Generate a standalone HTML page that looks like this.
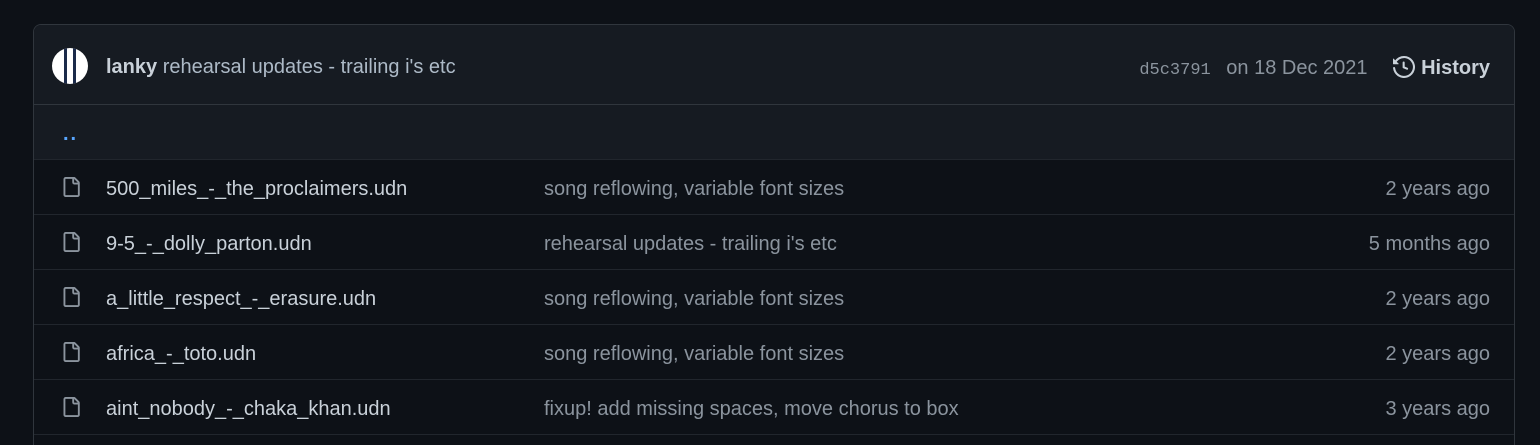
<!DOCTYPE html>
<html style="overflow:hidden;height:445px"><head><style>
body{margin:0;background:#0d1117;font-family:"Liberation Sans",sans-serif;width:1540px;height:445px;overflow:hidden;color:#c9d1d9;position:relative}
.box{position:absolute;left:33px;top:24px;width:1480px;height:420px;border:1px solid #30363d;border-bottom:none;border-radius:8px 8px 0 0;overflow:hidden}
.hdr{height:79px;background:#161b22;border-bottom:1px solid #30363d;position:relative;font-size:20px}
.av{position:absolute;left:18px;top:23px;width:36px;height:36px;border-radius:50%;background:#fff;overflow:hidden}
.av i{position:absolute;top:0;width:3px;height:36px;background:#1b2a4a}
.msg{position:absolute;left:72px;top:31px;color:#adbac7}
.msg b{color:#c9d1d9}
.rt{position:absolute;right:24px;top:31px;color:#8b949e}
.rt code{font-family:"Liberation Mono",monospace;font-size:17px;margin-right:10px}
.hist{color:#c9d1d9;font-weight:bold;margin-left:20px}
.row{height:54px;border-bottom:1px solid #21262d;position:relative;font-size:20px}
.up{background:#161b22}
.up span{position:absolute;left:29px;top:18px;color:#58a6ff;font-size:20px;letter-spacing:2px;font-weight:bold}
.row svg{position:absolute;left:27px;top:17px}
.n{position:absolute;left:72px;top:18px;color:#c9d1d9}
.c{position:absolute;left:510px;top:18px;color:#8b949e}
.t{position:absolute;right:24px;top:18px;color:#8b949e}
</style></head><body>
<div class="box">
<div class="hdr">
<div class="av"><i style="left:12px"></i><i style="left:21px"></i></div>
<div class="msg"><b>lanky</b> rehearsal updates - trailing i's etc</div>
<div class="rt"><code>d5c3791</code> on 18 Dec 2021 <span class="hist"><svg width="22" height="22" viewBox="0 0 16 16" style="vertical-align:-4px;margin-right:6px" fill="#c9d1d9"><path d="M1.643 3.143.427 1.927A.25.25 0 0 0 0 2.104V5.75c0 .138.112.25.25.25h3.646a.25.25 0 0 0 .177-.427L2.715 4.215a6.5 6.5 0 1 1-1.18 4.458.75.75 0 1 0-1.493.154 8.001 8.001 0 1 0 1.6-5.684ZM7.75 4a.75.75 0 0 1 .75.75v2.992l2.028.812a.75.75 0 0 1-.557 1.392l-2.5-1A.751.751 0 0 1 7 8.25v-3.5A.75.75 0 0 1 7.75 4Z"/></svg>History</span></div>
</div>
<div class="row up"><span>..</span></div>
<div class="row"><svg width="20" height="20" viewBox="0 0 16 16" fill="#8b949e"><path d="M2 1.75C2 .784 2.784 0 3.75 0h6.586c.464 0 .909.184 1.237.513l2.914 2.914c.329.328.513.773.513 1.237v9.586A1.75 1.75 0 0 1 13.25 16h-9.5A1.75 1.75 0 0 1 2 14.25Zm1.75-.25a.25.25 0 0 0-.25.25v12.5c0 .138.112.25.25.25h9.5a.25.25 0 0 0 .25-.25V6h-2.750A1.75 1.75 0 0 1 9 4.25V1.5Zm6.75.062V4.25c0 .138.112.25.25.25h2.688l-.011-.013-2.914-2.914-.013-.011Z"/></svg><span class="n">500_miles_-_the_proclaimers.udn</span><span class="c">song reflowing, variable font sizes</span><span class="t">2 years ago</span></div>
<div class="row"><svg width="20" height="20" viewBox="0 0 16 16" fill="#8b949e"><path d="M2 1.75C2 .784 2.784 0 3.75 0h6.586c.464 0 .909.184 1.237.513l2.914 2.914c.329.328.513.773.513 1.237v9.586A1.75 1.75 0 0 1 13.25 16h-9.5A1.75 1.75 0 0 1 2 14.25Zm1.75-.25a.25.25 0 0 0-.25.25v12.5c0 .138.112.25.25.25h9.5a.25.25 0 0 0 .25-.25V6h-2.75A1.75 1.75 0 0 1 9 4.25V1.5Zm6.75.062V4.25c0 .138.112.25.25.25h2.688l-.011-.013-2.914-2.914-.013-.011Z"/></svg><span class="n">9-5_-_dolly_parton.udn</span><span class="c">rehearsal updates - trailing i's etc</span><span class="t">5 months ago</span></div>
<div class="row"><svg width="20" height="20" viewBox="0 0 16 16" fill="#8b949e"><path d="M2 1.75C2 .784 2.784 0 3.75 0h6.586c.464 0 .909.184 1.237.513l2.914 2.914c.329.328.513.773.513 1.237v9.586A1.75 1.75 0 0 1 13.25 16h-9.5A1.75 1.75 0 0 1 2 14.25Zm1.75-.25a.25.25 0 0 0-.25.25v12.5c0 .138.112.25.25.25h9.5a.25.25 0 0 0 .25-.25V6h-2.75A1.75 1.75 0 0 1 9 4.25V1.5Zm6.75.062V4.25c0 .138.112.25.25.25h2.688l-.011-.013-2.914-2.914-.013-.011Z"/></svg><span class="n">a_little_respect_-_erasure.udn</span><span class="c">song reflowing, variable font sizes</span><span class="t">2 years ago</span></div>
<div class="row"><svg width="20" height="20" viewBox="0 0 16 16" fill="#8b949e"><path d="M2 1.75C2 .784 2.784 0 3.75 0h6.586c.464 0 .909.184 1.237.513l2.914 2.914c.329.328.513.773.513 1.237v9.586A1.75 1.75 0 0 1 13.25 16h-9.5A1.75 1.75 0 0 1 2 14.25Zm1.75-.25a.25.25 0 0 0-.25.25v12.5c0 .138.112.25.25.25h9.5a.25.25 0 0 0 .25-.25V6h-2.75A1.75 1.75 0 0 1 9 4.25V1.5Zm6.75.062V4.25c0 .138.112.25.25.25h2.688l-.011-.013-2.914-2.914-.013-.011Z"/></svg><span class="n">africa_-_toto.udn</span><span class="c">song reflowing, variable font sizes</span><span class="t">2 years ago</span></div>
<div class="row"><svg width="20" height="20" viewBox="0 0 16 16" fill="#8b949e"><path d="M2 1.75C2 .784 2.784 0 3.75 0h6.586c.464 0 .909.184 1.237.513l2.914 2.914c.329.328.513.773.513 1.237v9.586A1.75 1.75 0 0 1 13.25 16h-9.5A1.75 1.75 0 0 1 2 14.25Zm1.75-.25a.25.25 0 0 0-.25.25v12.5c0 .138.112.25.25.25h9.5a.25.25 0 0 0 .25-.25V6h-2.75A1.75 1.75 0 0 1 9 4.25V1.5Zm6.75.062V4.25c0 .138.112.25.25.25h2.688l-.011-.013-2.914-2.914-.013-.011Z"/></svg><span class="n">aint_nobody_-_chaka_khan.udn</span><span class="c">fixup! add missing spaces, move chorus to box</span><span class="t">3 years ago</span></div>
</div>
</body></html>
